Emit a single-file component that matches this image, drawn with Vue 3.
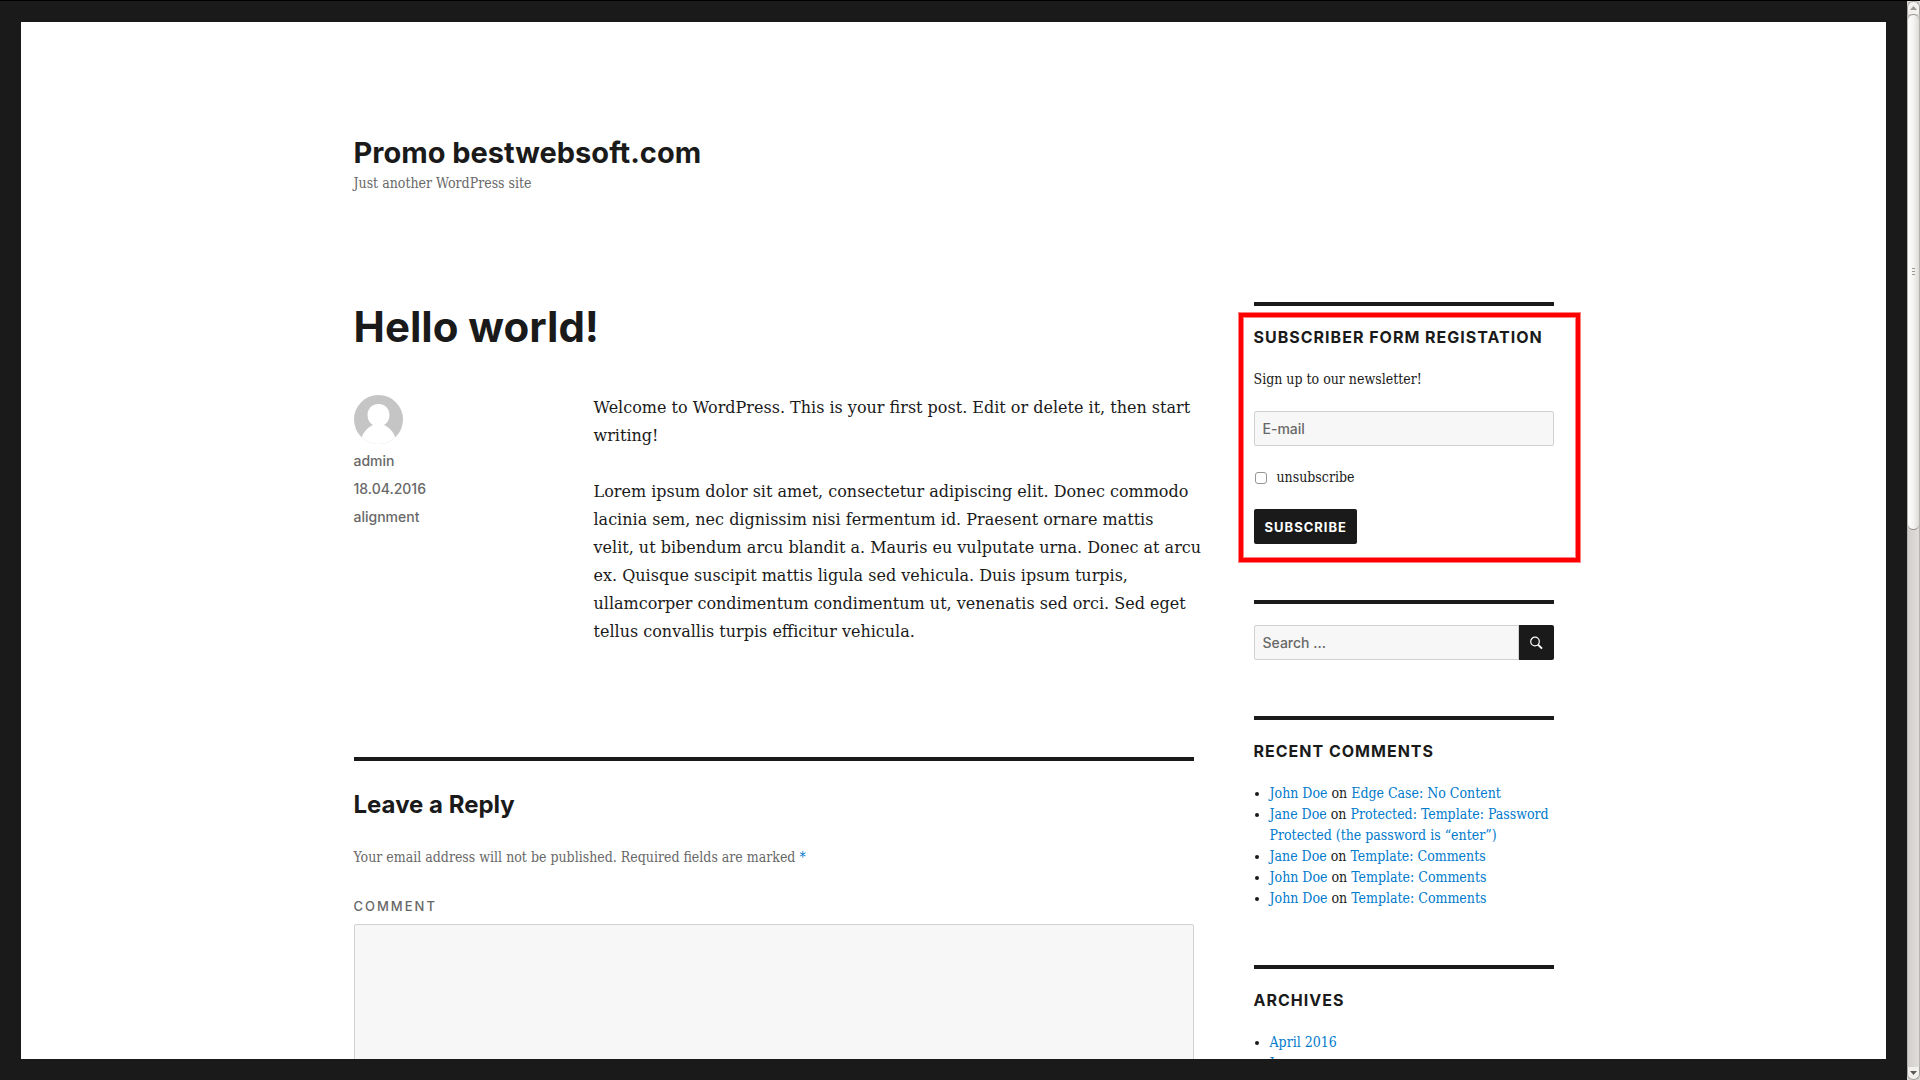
<script setup>
import { ref } from 'vue'

const email = ref('')
const unsubscribe = ref(false)
const query = ref('')
const comment = ref('')

const comments = [
  { author: 'John Doe', post: 'Edge Case: No Content' },
  { author: 'Jane Doe', post: 'Protected: Template: Password Protected (the password is “enter”)' },
  { author: 'Jane Doe', post: 'Template: Comments' },
  { author: 'John Doe', post: 'Template: Comments' },
  { author: 'John Doe', post: 'Template: Comments' },
]
const archives = ['April 2016', 'January']
</script>

<template>
  <div class="window">
    <div class="frame">
      <div class="page">
        <div class="site">
          <header class="site-header">
            <h1 class="site-title"><a href="#">Promo bestwebsoft.com</a></h1>
            <p class="tagline">Just another WordPress site</p>
          </header>

          <div class="columns">
            <main class="primary">
              <article>
                <h2 class="entry-title">Hello world!</h2>
                <div class="entry">
                  <footer class="entry-meta">
                    <svg class="avatar" viewBox="0 0 49 49" aria-hidden="true">
                      <defs>
                        <clipPath id="avatar-clip"><circle cx="24.5" cy="24.5" r="24.5" /></clipPath>
                      </defs>
                      <g clip-path="url(#avatar-clip)">
                        <rect width="49" height="49" fill="#c5c5c5" />
                        <path
                          fill="#fff"
                          d="M24.5 9C18.3 9 13.5 13.5 13.5 20C13.5 24.5 15.5 28 19 30C13.5 32.5 9.5 37 7.5 43L12 49H37L41.5 43C39.5 37 35.5 32.5 30 30C33.5 28 35.5 24.5 35.5 20C35.5 13.5 30.7 9 24.5 9Z"
                        />
                      </g>
                    </svg>
                    <a href="#">admin</a>
                    <a href="#">18.04.2016</a>
                    <a href="#">alignment</a>
                  </footer>
                  <div class="entry-content">
                    <p>Welcome to WordPress. This is your first post. Edit or delete it, then start writing!</p>
                    <p>
                      Lorem ipsum dolor sit amet, consectetur adipiscing elit. Donec commodo lacinia sem, nec
                      dignissim nisi fermentum id. Praesent ornare mattis<br />
                      velit, ut bibendum arcu blandit a. Mauris eu vulputate urna. Donec at arcu<br />
                      ex. Quisque suscipit mattis ligula sed vehicula. Duis ipsum turpis, ullamcorper condimentum
                      condimentum ut, venenatis sed orci. Sed eget tellus convallis turpis efficitur vehicula.
                    </p>
                  </div>
                </div>
              </article>

              <section class="respond">
                <h3 class="reply-title">Leave a Reply</h3>
                <form @submit.prevent>
                  <p class="notes">
                    Your email address will not be published. Required fields are marked
                    <span class="required">*</span>
                  </p>
                  <label class="comment-label" for="comment">Comment</label>
                  <textarea id="comment" v-model="comment" class="field comment-box"></textarea>
                </form>
              </section>
            </main>

            <aside class="secondary">
              <section class="widget highlighted">
                <h2 class="widget-title">Subscriber Form Registation</h2>
                <form class="subscribe" @submit.prevent>
                  <p>Sign up to our newsletter!</p>
                  <input v-model="email" class="field" type="email" placeholder="E-mail" aria-label="E-mail" />
                  <label class="check">
                    <input v-model="unsubscribe" type="checkbox" />
                    <span>unsubscribe</span>
                  </label>
                  <button class="submit" type="submit">Subscribe</button>
                </form>
              </section>

              <section class="widget">
                <form class="search" role="search" @submit.prevent>
                  <input v-model="query" class="field" type="search" placeholder="Search ..." aria-label="Search" />
                  <button type="submit" aria-label="Search">
                    <svg viewBox="0 0 16 16" width="16" height="16" aria-hidden="true">
                      <circle cx="7" cy="6.5" r="4.3" fill="none" stroke="#fff" stroke-width="1.2" />
                      <path d="M10 9.7L14 13.7" stroke="#fff" stroke-width="1.9" fill="none" />
                    </svg>
                  </button>
                </form>
              </section>

              <section class="widget">
                <h2 class="widget-title">Recent Comments</h2>
                <ul>
                  <li v-for="(item, i) in comments" :key="i">
                    <a href="#">{{ item.author }}</a> on <a href="#">{{ item.post }}</a>
                  </li>
                </ul>
              </section>

              <section class="widget">
                <h2 class="widget-title">Archives</h2>
                <ul>
                  <li v-for="month in archives" :key="month"><a href="#">{{ month }}</a></li>
                </ul>
              </section>
            </aside>
          </div>
        </div>
      </div>
    </div>

    <div class="scrollbar" aria-hidden="true">
      <div class="cap cap-up">
        <svg viewBox="0 0 7 4" width="7" height="4"><path d="M0 4L3.5 0L7 4Z" fill="#9a9895" /></svg>
      </div>
      <div class="track">
        <div class="thumb"><i></i><i></i><i></i></div>
      </div>
      <div class="cap cap-down">
        <svg viewBox="0 0 7 4" width="7" height="4"><path d="M0 0L3.5 4L7 0Z" fill="#5c5a58" /></svg>
      </div>
    </div>
  </div>
</template>

<style>
body {
  margin: 0;
  background: #1a1a1a;
}
</style>

<style scoped>
.window {
  --serif: 'DejaVu Serif', serif;
  --serif-narrow: 'DejaVu Serif Condensed', 'DejaVu Serif', serif;
  --sans: 'Inter', 'Open Sans', sans-serif;
  display: grid;
  grid-template-columns: minmax(0, 1fr) 13px;
  height: 100vh;
  box-sizing: border-box;
  border-top: 1px solid #000;
  background: #1a1a1a;
  color: #1a1a1a;
  font: 16px/28px var(--serif);
}

.window :is(h1, h2, h3, p, ul) {
  margin: 0;
}

a {
  color: #007acc;
  text-decoration: none;
}

.frame {
  display: flex;
  min-height: 0;
  padding: 21px;
}

.page {
  flex: 1;
  min-width: 0;
  overflow: hidden;
  background: #fff;
}

.site {
  max-width: 1200px;
  margin: 0 auto;
}

.site-header {
  padding: 113px 0 110px;
}

.window .site-title {
  font: 700 29px/35px var(--sans);
}

.site-title a {
  color: inherit;
}

.tagline {
  padding-top: 4px;
  color: #686868;
  font: 14px/18px var(--serif-narrow);
}

.columns {
  display: flex;
  justify-content: space-between;
  align-items: flex-start;
}

.primary {
  width: 70%;
}

.secondary {
  width: 25%;
  font: 14px/21px var(--serif-narrow);
}

.entry-title {
  font: 700 42px/49px var(--sans);
}

.entry {
  display: flex;
  padding: 43px 0 111px;
}

.entry-meta {
  display: flex;
  flex: none;
  flex-direction: column;
  align-items: flex-start;
  width: calc(100% / 3.5);
  font: 500 14px/28px var(--sans);
}

.entry-meta a {
  color: #686868;
}

.avatar {
  width: 49px;
  height: 49px;
  margin: 1px 0 3px;
}

.entry-content {
  display: grid;
  flex: none;
  gap: 28px;
  width: calc(100% / 1.4 + 8px);
}

.respond {
  padding-top: 28px;
  border-top: 4px solid #1a1a1a;
}

.reply-title {
  font: 700 24px/31px var(--sans);
}

.notes {
  padding: 23px 0 21px;
  color: #686868;
  font: 14px/28px var(--serif-narrow);
}

.required {
  color: #007acc;
}

.comment-label {
  display: block;
  color: #686868;
  font: 500 13px/28px var(--sans);
  letter-spacing: 2px;
  text-transform: uppercase;
}

.field {
  box-sizing: border-box;
  width: 100%;
  height: 35px;
  margin: 0;
  padding: 0 8px;
  border: 1px solid #d1d1d1;
  border-radius: 2px;
  outline: 0;
  background: #f7f7f7;
  color: #686868;
  font: 500 14px/18px var(--sans);
}

.field::placeholder {
  color: #686868;
  opacity: 1;
}

.comment-box {
  display: block;
  height: 240px;
  margin-top: 4px;
  resize: none;
}

.widget {
  position: relative;
  margin-bottom: 56px;
  padding-top: 21px;
  border-top: 4px solid #1a1a1a;
}

.highlighted::after {
  content: '';
  position: absolute;
  inset: 7px -26px -18px -15px;
  border: 4px solid #f00;
  box-shadow: 0 0 0 1px #ff8080, inset 0 0 0 1px #ff8080;
  pointer-events: none;
}

.widget .widget-title {
  margin-bottom: 21px;
  font: 700 16px/21px var(--sans);
  letter-spacing: 1px;
  text-transform: uppercase;
}

.subscribe {
  display: grid;
  gap: 21px;
  justify-items: start;
}

.check {
  display: flex;
  align-items: center;
  gap: 9px;
}

.check input {
  appearance: none;
  box-sizing: border-box;
  width: 12px;
  height: 12px;
  margin: 0 1px;
  border: 1px solid #979590;
  border-radius: 3px;
  background: #fff;
}

.check input:checked {
  background: #1a1a1a;
}

.submit {
  height: 35px;
  padding: 0 10px 0 11px;
  border: 0;
  border-radius: 2px;
  background: #1a1a1a;
  color: #fff;
  font: 700 13px/18px var(--sans);
  letter-spacing: 1px;
  text-transform: uppercase;
}

.search {
  display: flex;
}

.search .field {
  flex: 1;
  min-width: 0;
  appearance: none;
  border-radius: 2px 0 0 2px;
}

.search button {
  display: grid;
  place-items: center;
  width: 35px;
  height: 35px;
  padding: 0;
  border: 0;
  border-radius: 0 2px 2px 0;
  background: #1a1a1a;
}

ul {
  padding-left: 16px;
}

.scrollbar {
  display: flex;
  flex-direction: column;
  min-height: 0;
  background: #d9d6d3;
}

.cap {
  display: grid;
  place-items: center;
  box-sizing: border-box;
  height: 13px;
  border: 1px solid #a5a3a0;
  background: #f2f1f0;
}

.cap-up {
  border-radius: 6px 6px 0 0;
  border-bottom: 0;
}

.cap-down {
  border-radius: 0 0 6px 6px;
  border-top: 0;
}

.track {
  flex: 1;
  border: solid #b5b2af;
  border-width: 0 1px;
  background: linear-gradient(90deg, #d2cfcc, #e0dedb);
}

.thumb {
  display: flex;
  flex-direction: column;
  align-items: center;
  justify-content: center;
  gap: 2px;
  box-sizing: border-box;
  height: 49%;
  border: solid #8f8d8a;
  border-width: 1px 0;
  border-radius: 6px;
  background: linear-gradient(90deg, #fff, #f4f3f2 50%, #dedbd8);
}

.thumb i {
  width: 3px;
  height: 1px;
  background: #9a9895;
}
</style>
